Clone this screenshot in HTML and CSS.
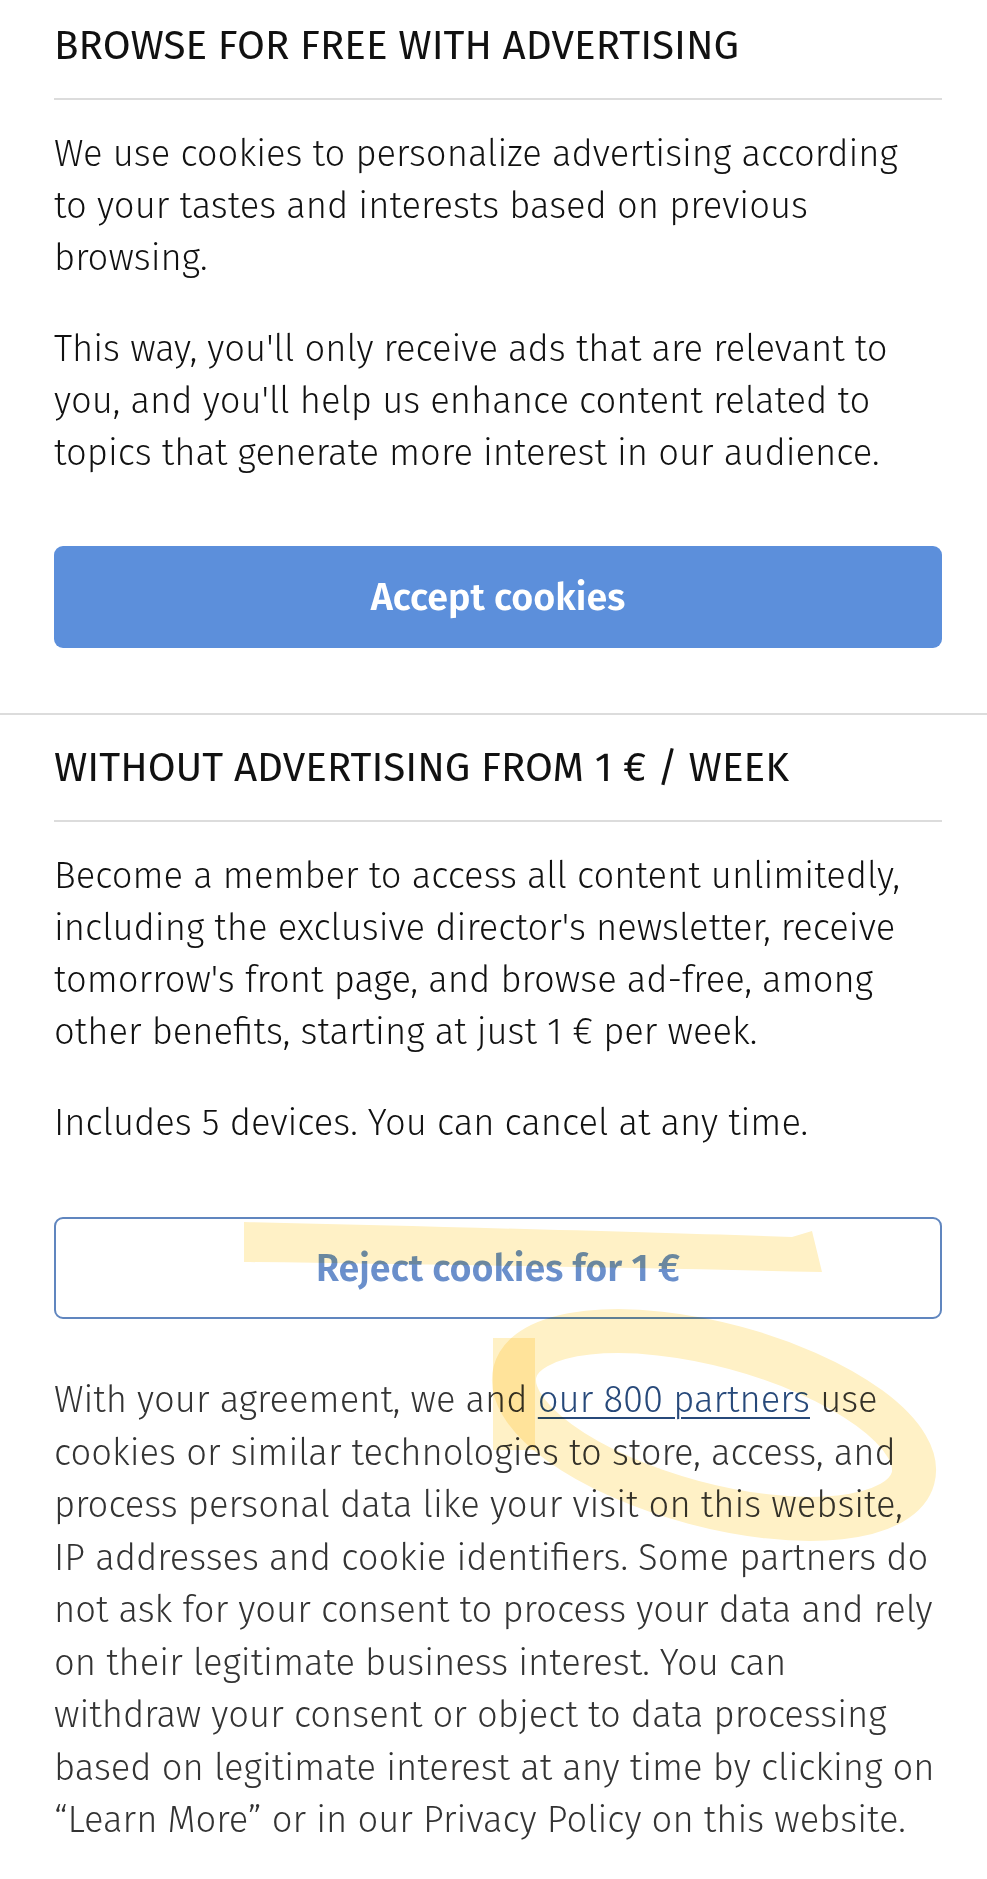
FILE: index.html
```html
<!DOCTYPE html>
<html lang="en">
<head>
<meta charset="utf-8">
<title>Cookies</title>
<link rel="stylesheet" href="styles.css">
</head>
<body>
<main class="page">
  <section class="block block--ads">
    <h2 class="block__title">BROWSE FOR FREE WITH ADVERTISING</h2>
    <p class="block__text block__text--first">We use cookies to personalize advertising according to your tastes and interests based on previous browsing.</p>
    <p class="block__text">This way, you'll only receive ads that are relevant to you, and you'll help us enhance content related to topics that generate more interest in our audience.</p>
    <button class="btn btn--primary" type="button">Accept cookies</button>
  </section>
  <div class="divider"></div>
  <section class="block block--paid">
    <h2 class="block__title">WITHOUT ADVERTISING FROM 1 € / WEEK</h2>
    <p class="block__text block__text--first">Become a member to access all content unlimitedly, including the exclusive director's newsletter, receive tomorrow's front page, and browse ad-free, among other benefits, starting at just 1 € per week.</p>
    <p class="block__text">Includes 5 devices. You can cancel at any time.</p>
    <button class="btn btn--outline" type="button">Reject cookies for 1 €</button>
    <p class="legal">With your agreement, we and <a class="legal__link" href="#">our 800 partners</a> use cookies or similar technologies to store, access, and process personal data like your visit on this website, IP addresses and cookie identifiers. Some partners do not ask for your consent to process your data and rely on their legitimate business interest. You can withdraw your consent or object to data processing based on legitimate interest at any time by clicking on “Learn More” or in our Privacy Policy on this website.</p>
  </section>
  <svg class="marks" viewBox="0 0 987 1879" width="987" height="1879" aria-hidden="true">
    <path class="marks__stroke" d="M244 1222 C420 1226 640 1232 792 1237 L812 1231 L822 1272 C640 1268 420 1264 244 1262 Z"/>
    <ellipse class="marks__ring" cx="714" cy="1425" rx="206" ry="80" transform="rotate(15 714 1425)"/>
    <path class="marks__start" d="M514 1338 L514 1450"/>
  </svg>
</main>
</body>
</html>
```
FILE: styles.css
```css
html, body {
  margin: 0;
  padding: 0;
  background: #ffffff;
}

body {
  font-family: "Fira Sans", "Open Sans", "Noto Sans", sans-serif;
  color: #111111;
}

.page {
  position: relative;
  width: 987px;
  min-height: 1879px;
}

.block {
  display: flex;
  flex-direction: column;
  padding: 0 45px 0 54px;
}

.block--ads {
  padding-top: 20px;
  padding-bottom: 65px;
}

.block--paid {
  padding-top: 27px;
}

.block__title {
  margin: 0;
  font-size: 40.4px;
  font-weight: 400;
  line-height: 52px;
  padding-bottom: 26px;
  border-bottom: 2px solid #dcdcdc;
  color: #111111;
  white-space: nowrap;
}

.block__text {
  margin: 39px 9px 0 0;
  font-size: 36.4px;
  font-weight: 300;
  line-height: 52px;
  color: #111111;
}

.block__text--first {
  margin-top: 28px;
}

.divider {
  height: 2px;
  background: #dcdcdc;
}

.btn {
  display: block;
  width: 100%;
  height: 102px;
  margin-top: 67px;
  border-radius: 9px;
  font-family: inherit;
  font-size: 37.7px;
  font-weight: 600;
  cursor: pointer;
}

.btn--primary {
  background: #5c8fdb;
  border: 0;
  color: #ffffff;
}

.btn--outline {
  margin-top: 68px;
  background: #ffffff;
  border: 2px solid #6086bf;
  color: #6a8fcb;
}

.legal {
  margin: 55px 0 0;
  font-size: 36.4px;
  font-weight: 300;
  line-height: 52.5px;
  color: #333333;
}

.legal__link {
  color: #27497a;
  text-decoration: underline;
  text-decoration-thickness: 2px;
  text-underline-offset: 5px;
}

.marks {
  position: absolute;
  top: 0;
  left: 0;
  pointer-events: none;
  mix-blend-mode: multiply;
}

.marks__stroke,
.marks__ring,
.marks__start {
  mix-blend-mode: multiply;
}

.marks__stroke {
  fill: #fff1c6;
}

.marks__ring {
  fill: none;
  stroke: #fff1c6;
  stroke-width: 44;
}

.marks__start {
  fill: none;
  stroke: #fff1c6;
  stroke-width: 42;
}
```
